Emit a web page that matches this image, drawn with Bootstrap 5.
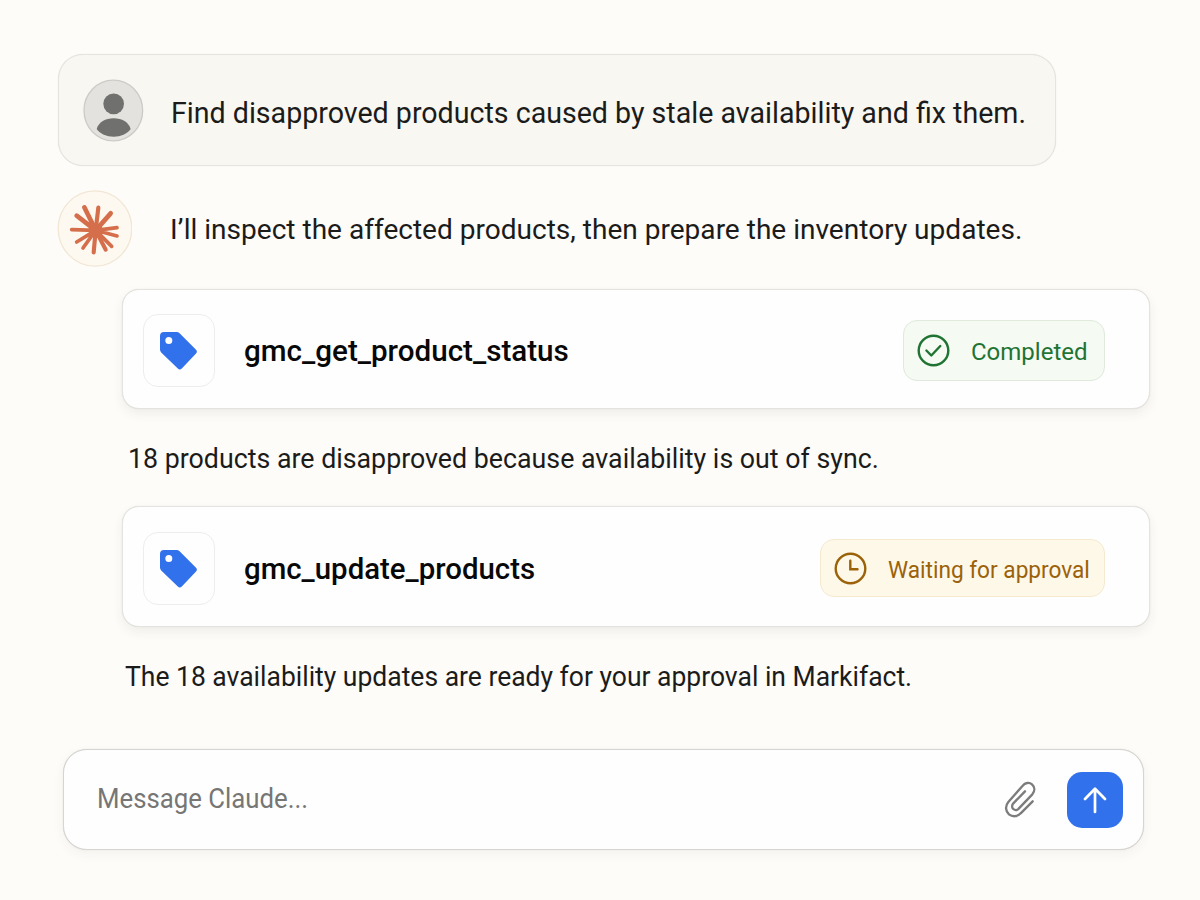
<!DOCTYPE html>
<html lang="en">
<head>
<meta charset="utf-8">
<meta name="viewport" content="width=device-width, initial-scale=1">
<title>Claude chat</title>
<link href="https://cdn.jsdelivr.net/npm/bootstrap@5.3.0/dist/css/bootstrap.min.css" rel="stylesheet">
<style>
  body { background: #fdfcf9; color: #1b1b1a; font-family: Roboto, "Liberation Sans", sans-serif; font-size: 28px; line-height: 34px; }
  .chat { width: 1200px; height: 900px; padding: 54px 50px 0 57px; }
  .line { display: inline-block; white-space: nowrap; transform-origin: left center; }
  .bubble { width: 998px; height: 112px; margin-left: 1px; padding-left: 24px; background: #f9f7f2; border: 1px solid #e6e4df; border-radius: 25px; box-shadow: 0 0 1px #dedcd6; }
  .bubble .line { font-size: 28.6px; margin: 6px 0 0 27px; }
  .reply { height: 76px; margin-top: 24px; }
  .reply .line { font-size: 28.05px; margin: 4px 0 0 38px; }
  .tool { width: 1028px; margin-left: 65px; padding: 0 44px 0 20px; background: #fefefe; border: 1px solid #e4e3df; border-radius: 17px; box-shadow: 0 5px 11px rgba(70, 60, 40, .07), 0 0 1px #dcdbd6; }
  .tool-a { height: 120px; margin-top: 23px; padding-top: 2px; }
  .tool-b { height: 121px; margin-top: 31px; padding-top: 3px; }
  .tile { width: 72px; height: 73px; padding-top: 3px; border: 1px solid #ededeb; border-radius: 15px; background: #fefefe; }
  .tool-name { font-size: 29.4px; font-weight: 500; color: #080808; margin: 2px 0 0 29px; }
  .tool-a .tool-name { font-size: 29.6px; }
  .status { border: 1px solid; border-radius: 14px; font-size: 24px; padding-left: 13px; }
  .status svg { margin-top: 1px; }
  .status .line { margin: 4px 0 0 20px; }
  .done { width: 202px; height: 61px; color: #1f7433; background: #f5faf3; border-color: #dfeadd; }
  .wait { width: 285px; height: 58px; color: #9b6209; background: #fef8e9; border-color: #f5ead0; }
  .note { height: 34px; }
  .note-a { margin: 33px 0 -1px 71px; }
  .note-b { margin: 33px 0 -1px 68px; }
  .composer { width: 1081px; height: 101px; margin: 56px 0 0 6px; padding: 1px 20px 0 33px; background: #fefefe; border: 1px solid #d6d5d1; border-radius: 24px; box-shadow: 0 4px 12px rgba(70, 60, 40, .05), 0 0 1px #d2d1cd; }
  .hint { color: #767675; transform: scaleX(.92); margin-top: -2px; }
  .send { width: 56px; height: 56px; border-radius: 15px; background: #3172ec; margin-left: 31px; }
  .send:hover { background: #2563dc; }
</style>
</head>
<body>
<svg class="d-none">
  <symbol id="tag" viewBox="0 0 38 39">
    <path fill="#3172ec" fill-rule="evenodd" d="M4 0H16.6Q18.3 0 19.6 1.2L35.8 17.4Q38 19.6 35.8 21.8L21.8 36.6Q19.8 38.6 17.8 36.6L1.2 20.4Q0 19.2 0 17.6V4Q0 0 4 0ZM8.8 5A3.5 3.5 0 1 0 8.8 12A3.5 3.5 0 1 0 8.8 5Z"/>
  </symbol>
</svg>
<main class="chat d-flex flex-column">
  <section class="bubble d-flex align-items-center flex-shrink-0">
    <svg class="flex-shrink-0" width="61" height="63" viewBox="129 118 183 189">
      <ellipse cx="220" cy="212.5" rx="88" ry="91" fill="#e3e2de" stroke="#cccbc8" stroke-width="4"/>
      <circle cx="221" cy="192.5" r="31" fill="#70706e"/>
      <path fill="#70706e" d="M170 268C176 248 196 236 221 236C246 236 266 248 272 268C262 283 242 291 221 291C200 291 180 283 170 268Z"/>
    </svg>
    <span class="line">Find disapproved products caused by stale availability and fix them.</span>
  </section>

  <section class="reply d-flex align-items-center flex-shrink-0">
    <svg class="flex-shrink-0" width="75" height="77" viewBox="22 29 225 231">
      <ellipse cx="136" cy="144.5" rx="110.5" ry="113" fill="#fdf9f1" stroke="#f2e6d5" stroke-width="4"/>
      <g stroke="#d56f4b" stroke-linecap="round">
        <path stroke-width="14" d="M138 150L104 81M138 150L81 106M138 150L183 99"/>
        <path stroke-width="12.5" d="M138 150L146 82M138 150L168 208M138 150L132 216"/>
        <path stroke-width="11" d="M138 150L202 142M138 150L202 167M138 150L186 198M138 150L66 148M138 150L81 185M138 150L100 203"/>
      </g>
      <circle cx="138" cy="150" r="21" fill="#d56f4b"/>
    </svg>
    <span class="line">I’ll inspect the affected products, then prepare the inventory updates.</span>
  </section>

  <section class="tool tool-a d-flex align-items-center flex-shrink-0">
    <div class="tile d-flex align-items-center justify-content-center flex-shrink-0"><svg width="38" height="39"><use href="#tag"/></svg></div>
    <span class="line tool-name">gmc_get_product_status</span>
    <div class="status done d-flex align-items-center ms-auto">
      <svg class="flex-shrink-0" width="34" height="34" viewBox="0 0 34 34" fill="none" stroke="currentColor" stroke-width="2.4" stroke-linecap="round" stroke-linejoin="round"><circle cx="16.500" cy="16.500" r="14.8"/><path d="M9.400 16.500L14.300 21.500L23.300 12"/></svg>
      <span class="line">Completed</span>
    </div>
  </section>

  <p class="note note-a flex-shrink-0"><span class="line" style="transform:scaleX(.956)">18 products are disapproved because availability is out of sync.</span></p>

  <section class="tool tool-b d-flex align-items-center flex-shrink-0">
    <div class="tile d-flex align-items-center justify-content-center flex-shrink-0"><svg width="38" height="39"><use href="#tag"/></svg></div>
    <span class="line tool-name">gmc_update_products</span>
    <div class="status wait d-flex align-items-center ms-auto">
      <svg class="flex-shrink-0" width="34" height="34" viewBox="0 0 34 34" fill="none" stroke="currentColor" stroke-width="2.4" stroke-linecap="round"><circle cx="16.5" cy="16.5" r="14.8"/><path d="M16.3 8.800V17.3H23.5"/></svg>
      <span class="line" style="transform:scaleX(.943)">Waiting for approval</span>
    </div>
  </section>

  <p class="note note-b flex-shrink-0"><span class="line" style="transform:scaleX(.946)">The 18 availability updates are ready for your approval in Markifact.</span></p>

  <section class="composer d-flex align-items-center flex-shrink-0">
    <span class="line hint">Message Claude...</span>
    <svg class="ms-auto" width="32" height="38" viewBox="130 138 96 114" fill="none" stroke="#7c7c7b" stroke-width="7" stroke-linecap="round" stroke-linejoin="round"><path d="M216 199L180 235C170 246 155 246 145 238C134 228 133 213 143 201L186 152C193 143 206 141 214 148C223 156 223 168 215 178L174 221C169 227 162 226 158 222C153 218 153 211 158 205L193 169"/></svg>
    <button class="send btn p-0 border-0 d-flex align-items-center justify-content-center" type="button" aria-label="Send">
      <svg width="26" height="28" viewBox="0 0 26 28" fill="none" stroke="#fff" stroke-width="2.7" stroke-linecap="round" stroke-linejoin="round"><path d="M13 26V3M3 13L13 2.7L23 13"/></svg>
    </button>
  </section>
</main>
<script src="https://cdn.jsdelivr.net/npm/bootstrap@5.3.0/dist/js/bootstrap.bundle.min.js"></script>
</body>
</html>
